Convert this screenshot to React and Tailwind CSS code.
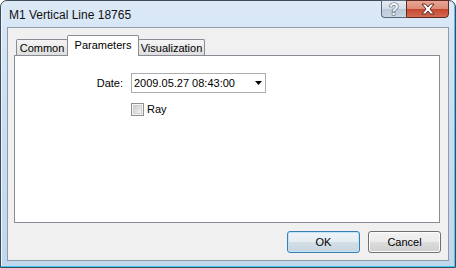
import React from "react";

const font = { fontFamily: '"Liberation Sans", Arial, sans-serif' };

function TitleButtons() {
  return (
    <div className="-mt-px flex h-[18px]">
      <div className="flex w-[25px] items-center justify-center rounded-bl-[4px] border border-r-0 border-[#5b6877] bg-[linear-gradient(to_bottom,#e4ebf2_0%,#d3dde8_50%,#b9c8d8_50%,#c9d6e3_100%)]">
        <svg width="14" height="16" viewBox="0 0 14 16">
          <text
            x="7"
            y="14"
            textAnchor="middle"
            fontSize="16"
            fontWeight="bold"
            fill="#f6f8fa"
            stroke="#56636f"
            strokeWidth="1.2"
            paintOrder="stroke"
            fontFamily="Liberation Sans, Arial, sans-serif"
          >
            ?
          </text>
        </svg>
      </div>
      <div className="flex w-[43px] items-center justify-center rounded-br-[4px] border border-[#5e2a22] bg-[linear-gradient(to_bottom,#e9a797_0%,#db8a77_50%,#c5452f_50%,#d46a52_100%)]">
        <svg width="16" height="12" viewBox="0 0 16 12">
          <path
            d="M2 1h3.5L8 4l2.5-3H14l-4 5 4 5h-3.5L8 8l-2.5 3H2l4-5z"
            fill="#ffffff"
            stroke="#5a2a22"
            strokeWidth="1"
            strokeLinejoin="round"
          />
        </svg>
      </div>
    </div>
  );
}

function Tab({ label, selected, className = "" }) {
  if (selected) {
    return (
      <div
        className={`relative z-10 -mb-px flex h-[21px] justify-center rounded-t-[2px] border border-b-0 border-[#898c95] bg-white pt-[3px] text-[11px] leading-[13px] text-black ${className}`}
      >
        {label}
      </div>
    );
  }
  return (
    <div
      className={`flex h-[16px] items-center justify-center rounded-t-[2px] border border-b-0 border-[#898c95] bg-[linear-gradient(to_bottom,#f5f5f5,#dedede)] pt-px text-[11px] leading-[13px] text-black ${className}`}
    >
      {label}
    </div>
  );
}

function Button({ label, primary }) {
  return (
    <button
      className={`flex h-[22px] w-[73px] items-center justify-center rounded-[3px] border text-[11px] text-black ${
        primary
          ? "border-[#3c7fb1] bg-[linear-gradient(to_bottom,#eef4f9_0%,#e4ecf2_50%,#d3dee7_50%,#c8d5e0_100%)] shadow-[inset_0_0_0_1px_#bfe4f7]"
          : "border-[#707070] bg-[linear-gradient(to_bottom,#f2f2f2_0%,#ebebeb_50%,#dddddd_50%,#cfcfcf_100%)] shadow-[inset_0_0_0_1px_#fbfbfb]"
      }`}
    >
      {label}
    </button>
  );
}

export default function App() {
  return (
    <div className="h-[268px] w-[456px] bg-white" style={font}>
      <div className="flex h-full w-full flex-col rounded-t-[7px] border border-[#3e4a57] bg-[linear-gradient(to_bottom,#dce9f7,#cadff3_40%,#c0d7ee)] shadow-[inset_-1px_-1px_0_#3ccaf3,inset_1px_0_0_#eef5fc]">
        {/* title bar */}
        <div className="flex h-[26px] items-start justify-between pl-[8px] pr-[6px]">
          <div className="self-center pt-[2px] text-[12px] text-[#111]">
            M1 Vertical Line 18765
          </div>
          <TitleButtons />
        </div>

        {/* client */}
        <div className="mx-[6px] mb-[6px] flex flex-1 flex-col border border-[#8e9ba8] bg-[#f0f0f0]">
          <div className="ml-[6px] mr-[8px] mt-[7px] flex flex-col">
            <div className="flex items-end pl-[2px]">
              <Tab label="Common" className="w-[52px]" />
              <Tab label="Parameters" selected className="-ml-px w-[72px]" />
              <Tab label="Visualization" className="-ml-px w-[67px]" />
            </div>
            <div className="h-[168px] border border-[#898c95] bg-white pt-[17px]">
              <div className="grid grid-cols-[108px_auto] items-center gap-x-[8px] gap-y-[8px] text-[11px] text-black">
                <div className="text-right">Date:</div>
                <div className="flex h-[20px] w-[135px] items-center justify-between border border-[#abadb3] bg-white pl-[2px] pr-[3px]">
                  <span>2009.05.27 08:43:00</span>
                  <svg width="7" height="4" viewBox="0 0 7 4">
                    <path d="M0 0h7L3.5 4z" fill="#000" />
                  </svg>
                </div>
                <div />
                <div className="flex items-center gap-[3px]">
                  <div className="flex h-[13px] w-[13px] items-center justify-center border border-[#8f8f8f] bg-[#f4f4f4]">
                    <div className="h-[9px] w-[9px] border border-[#d0d0d0] bg-[linear-gradient(135deg,#c9ccd1,#f3f3f3)]" />
                  </div>
                  <span>Ray</span>
                </div>
              </div>
            </div>
          </div>
          <div className="mr-[7px] mt-[8px] flex justify-end gap-[8px]">
            <Button label="OK" primary />
            <Button label="Cancel" />
          </div>
        </div>
      </div>
    </div>
  );
}
